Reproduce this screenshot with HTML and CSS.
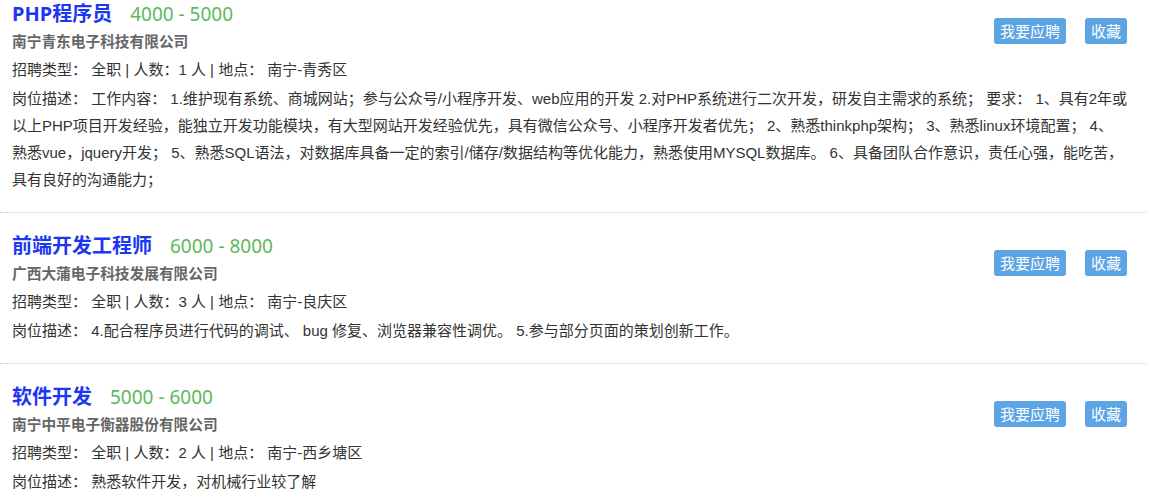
FILE: index.html
```html
<!DOCTYPE html>
<html lang="zh-CN">
<head>
<meta charset="utf-8">
<title>职位列表</title>
<link rel="stylesheet" href="styles.css">
</head>
<body>
<div class="list">
  <div class="job">
    <div class="head">
      <div class="info">
        <div class="title-line"><span class="title">PHP程序员</span><span class="salary">4000 - 5000</span></div>
        <div class="company">南宁青东电子科技有限公司</div>
        <div class="meta">招聘类型： 全职 | 人数：1 人 | 地点： 南宁-青秀区</div>
      </div>
      <div class="actions">
        <button class="btn">我要应聘</button>
        <button class="btn">收藏</button>
      </div>
    </div>
    <div class="desc">岗位描述： 工作内容： 1.维护现有系统、商城网站；参与公众号/小程序开发、web应用的开发 2.对PHP系统进行二次开发，研发自主需求的系统； 要求： 1、具有2年或以上PHP项目开发经验，能独立开发功能模块，有大型网站开发经验优先，具有微信公众号、小程序开发者优先； 2、熟悉thinkphp架构； 3、熟悉linux环境配置； 4、<br>熟悉vue，jquery开发； 5、熟悉SQL语法，对数据库具备一定的索引/储存/数据结构等优化能力，熟悉使用MYSQL数据库。 6、具备团队合作意识，责任心强，能吃苦，<br>具有良好的沟通能力；</div>
  </div>
  <div class="job">
    <div class="head">
      <div class="info">
        <div class="title-line"><span class="title">前端开发工程师</span><span class="salary">6000 - 8000</span></div>
        <div class="company">广西大蒲电子科技发展有限公司</div>
        <div class="meta">招聘类型： 全职 | 人数：3 人 | 地点： 南宁-良庆区</div>
      </div>
      <div class="actions">
        <button class="btn">我要应聘</button>
        <button class="btn">收藏</button>
      </div>
    </div>
    <div class="desc">岗位描述： 4.配合程序员进行代码的调试、 bug 修复、浏览器兼容性调优。 5.参与部分页面的策划创新工作。</div>
  </div>
  <div class="job">
    <div class="head">
      <div class="info">
        <div class="title-line"><span class="title">软件开发</span><span class="salary">5000 - 6000</span></div>
        <div class="company">南宁中平电子衡器股份有限公司</div>
        <div class="meta">招聘类型： 全职 | 人数：2 人 | 地点： 南宁-西乡塘区</div>
      </div>
      <div class="actions">
        <button class="btn">我要应聘</button>
        <button class="btn">收藏</button>
      </div>
    </div>
    <div class="desc">岗位描述： 熟悉软件开发，对机械行业较了解</div>
  </div>
</div>
</body>
</html>
```
FILE: styles.css
```css
html, body {
  margin: 0;
  padding: 0;
  background: #fff;
}
body {
  font-family: "Liberation Sans", "Noto Sans CJK SC", sans-serif;
  font-size: 15px;
  color: #333;
  overflow: hidden;
}
.list {
  width: 1146px;
  margin-top: -19px;
}
.job {
  padding: 19px 12px 19px 12px;
  border-bottom: 1px dotted #c8c8c8;
}
.head {
  display: flex;
  justify-content: space-between;
  align-items: flex-start;
}
.title-line {
  height: 28px;
  line-height: 28px;
  white-space: nowrap;
  font-family: "Noto Sans", "Noto Sans CJK SC", sans-serif;
}
.title {
  font-size: 20px;
  font-weight: bold;
  color: #1c37f2;
}
.salary {
  font-size: 19px;
  color: #5cb85c;
  margin-left: 18px;
}
.company {
  line-height: 28px;
  font-weight: bold;
  color: #666;
  font-size: 14.7px;
}
.meta {
  line-height: 28px;
}
.desc {
  margin-top: 1px;
  line-height: 27px;
}
.actions {
  display: flex;
  gap: 19px;
  margin-top: 18px;
  margin-right: 7px;
}
.btn {
  height: 26px;
  padding: 0 6px;
  border: none;
  border-radius: 3px;
  background: #5ca4e4;
  color: #fff;
  font-family: "Noto Sans CJK SC", sans-serif;
  font-size: 15px;
  line-height: 26px;
  cursor: pointer;
}
```
